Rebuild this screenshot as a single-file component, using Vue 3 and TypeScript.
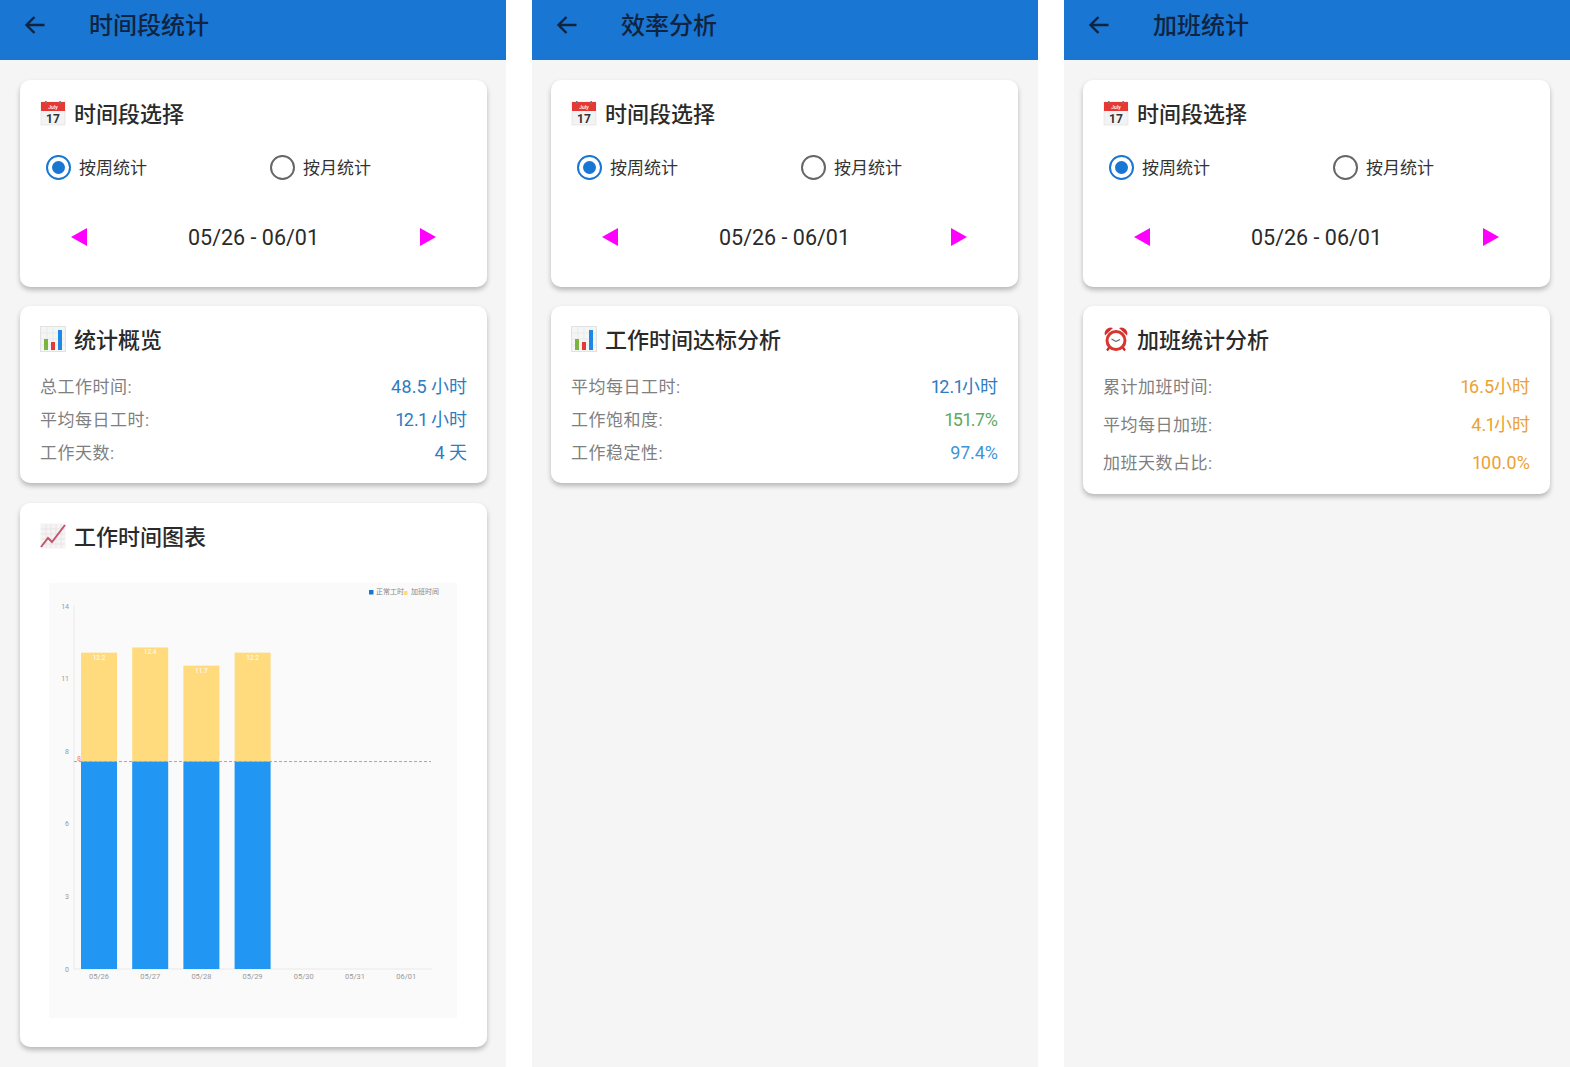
<template>
  <div class="screens">
    <section v-for="screen in screens" :key="screen.title" class="panel">
      <header class="app-bar">
        <svg class="back" width="22" height="20" viewBox="0 0 22 20">
          <path d="M20.5 10H3M10.5 2 2.5 10l8 8" fill="none" stroke="#10233f" stroke-width="2.4" />
        </svg>
        <h1>{{ screen.title }}</h1>
      </header>

      <div class="card pick-card">
        <h2 class="card-title">
          <svg class="emoji" viewBox="0 0 26 26">
            <rect x="1" y="2" width="24" height="23" fill="#f3f3f3" stroke="#ddd" stroke-width="0.6" />
            <rect x="1" y="2" width="24" height="9" fill="#e53935" />
            <rect x="5" y="1" width="1.6" height="3" fill="#777" />
            <rect x="19.4" y="1" width="1.6" height="3" fill="#777" />
            <text x="13" y="9" class="cal-month">July</text>
            <text x="13" y="22.5" class="cal-day">17</text>
          </svg>
          时间段选择
        </h2>
        <div class="radio-row">
          <div class="radio-option">
            <span class="radio on"><i></i></span>
            <span class="radio-label">按周统计</span>
          </div>
          <div class="radio-option">
            <span class="radio"></span>
            <span class="radio-label">按月统计</span>
          </div>
        </div>
        <div class="date-row">
          <span class="tri left"></span>
          <span class="date">05/26 - 06/01</span>
          <span class="tri right"></span>
        </div>
      </div>

      <div class="card stat-card" :class="{ wide: screen.wide }">
        <h2 class="card-title">
          <svg v-if="screen.icon === 'bars'" class="emoji" viewBox="0 0 26 26">
            <rect x="0.5" y="0.5" width="25" height="25" fill="#f4f6f6" stroke="#e2e2e2" />
            <path d="M1 7h24M1 13h24M1 19h24M7 1v24M13 1v24M19 1v24" stroke="#e3e6e6" stroke-width="0.6" />
            <rect x="4" y="13" width="4" height="11" fill="#7cb342" />
            <rect x="11" y="16" width="4" height="8" fill="#e53935" />
            <rect x="18" y="4" width="4" height="20" fill="#1e88e5" />
          </svg>
          <svg v-else class="emoji" viewBox="0 0 26 26">
            <path d="M2 9.5a6 6 0 0 1 8-7.5zM24 9.5a6 6 0 0 0-8-7.5z" fill="#d32f2f" />
            <path d="m6.5 21-2.5 3.5M19.5 21l2.5 3.5" stroke="#c62828" stroke-width="2.2" />
            <circle cx="13" cy="14.5" r="9" fill="#fff" stroke="#d9362f" stroke-width="3" />
            <path d="M13 15.5 8.5 13M13 15.5l4-2" stroke="#666" stroke-width="1.2" fill="none" />
          </svg>
          {{ screen.heading }}
        </h2>
        <div class="rows">
          <div v-for="row in screen.rows" :key="row.label" class="row">
            <span class="label">{{ row.label }}</span>
            <span class="value" :style="{ color: row.color }">{{ row.value }}</span>
          </div>
        </div>
      </div>

      <div v-if="screen.chart" class="card chart-card">
        <h2 class="card-title">
          <svg class="emoji" viewBox="0 0 26 26">
            <rect x="0.5" y="0.5" width="25" height="25" fill="#f6f3f4" />
            <path d="M1 6h24M1 11h24M1 16h24M1 21h24M6 1v24M11 1v24M16 1v24M21 1v24" stroke="#e4dfe2" stroke-width="0.7" />
            <path d="M1 24 8 15l4 4L25 2" fill="none" stroke="#c2566b" stroke-width="2" />
          </svg>
          工作时间图表
        </h2>
        <svg class="chart" width="408" height="435" viewBox="0 0 408 435">
          <line x1="25" y1="23" x2="25" :y2="baseY" class="axis" />
          <line x1="25" :y1="baseY" x2="383" :y2="baseY" class="axis" />
          <line x1="25" :y1="yOf(8)" x2="382" :y2="yOf(8)" class="limit" />
          <text x="30" y="178" class="limit-label">8</text>

          <text v-for="t in yTicks" :key="t.label" x="20" :y="t.y + 2.5" class="y-label">{{ t.label }}</text>

          <g v-for="(bar, i) in bars" :key="bar.date">
            <template v-if="bar.total > 0">
              <rect :x="barX(i)" :y="yOf(bar.total)" width="36" :height="yOf(8) - yOf(bar.total)" fill="#ffdb7e" />
              <rect :x="barX(i)" :y="yOf(8)" width="36" :height="baseY - yOf(8)" fill="#2196f3" />
              <text :x="barX(i) + 18" :y="yOf(bar.total) + 7" class="bar-label">{{ bar.total }}</text>
            </template>
            <text :x="barX(i) + 18" :y="baseY + 10" class="x-label">{{ bar.date }}</text>
          </g>

          <rect x="320" y="7" width="4.5" height="4.5" fill="#1976d2" />
          <text x="327" y="11" class="legend">正常工时</text>
          <rect x="355" y="8" width="3.5" height="4" fill="#ffdb7e" />
          <text x="362" y="11" class="legend">加班时间</text>
        </svg>
      </div>
    </section>
  </div>
</template>

<script setup lang="ts">
interface StatRow {
  label: string;
  value: string;
  color: string;
}

interface Screen {
  title: string;
  heading: string;
  icon: 'bars' | 'clock';
  rows: StatRow[];
  wide?: boolean;
  chart?: boolean;
}

const blue = '#2f7cc0';
const orange = '#eba234';

const screens: Screen[] = [
  {
    title: '时间段统计',
    heading: '统计概览',
    icon: 'bars',
    chart: true,
    rows: [
      { label: '总工作时间:', value: '48.5 小时', color: blue },
      { label: '平均每日工时:', value: '12.1 小时', color: blue },
      { label: '工作天数:', value: '4 天', color: blue },
    ],
  },
  {
    title: '效率分析',
    heading: '工作时间达标分析',
    icon: 'bars',
    rows: [
      { label: '平均每日工时:', value: '12.1小时', color: blue },
      { label: '工作饱和度:', value: '151.7%', color: '#5bab60' },
      { label: '工作稳定性:', value: '97.4%', color: '#3d94d8' },
    ],
  },
  {
    title: '加班统计',
    heading: '加班统计分析',
    icon: 'clock',
    wide: true,
    rows: [
      { label: '累计加班时间:', value: '16.5小时', color: orange },
      { label: '平均每日加班:', value: '4.1小时', color: orange },
      { label: '加班天数占比:', value: '100.0%', color: orange },
    ],
  },
];

const bars = [
  { date: '05/26', total: 12.2 },
  { date: '05/27', total: 12.4 },
  { date: '05/28', total: 11.7 },
  { date: '05/29', total: 12.2 },
  { date: '05/30', total: 0 },
  { date: '05/31', total: 0 },
  { date: '06/01', total: 0 },
];

// plot area in chart coordinates: value 14 at y=23, value 0 at y=386
const baseY = 386;
const yOf = (v: number) => baseY - (v / 14) * 363;
const barX = (i: number) => 32 + i * 51.2;

const yTicks = [0, 1, 2, 3, 4, 5].map((i) => ({
  label: Math.round(i * 2.8),
  y: yOf(i * 2.8),
}));
</script>

<style scoped>
.screens {
  display: grid;
  grid-template-columns: repeat(3, 506px);
  column-gap: 26px;
  height: 1067px;
  overflow: hidden;
  font-family: Roboto, 'Noto Sans CJK SC', sans-serif;
}

.panel {
  background: #f5f5f5;
  padding-left: 19px;
}

.panel:first-child {
  padding-left: 20px;
}

.app-bar {
  display: flex;
  align-items: center;
  height: 50px;
  padding-bottom: 10px;
  margin: 0 0 20px -19px;
  background: #1976d2;
}

.panel:first-child .app-bar {
  margin-left: -20px;
}

.back {
  margin-left: 24px;
}

.app-bar h1 {
  margin: 2px 0 0 43px;
  font-size: 24px;
  line-height: 30px;
  font-weight: 500;
  color: #10233f;
}

.card {
  width: 467px;
  box-sizing: border-box;
  padding: 20px 20px 0;
  margin-bottom: 20px;
  background: #fff;
  border-radius: 10px;
  box-shadow: 0 3px 5px rgba(0, 0, 0, 0.25);
}

.pick-card {
  height: 207px;
  margin-bottom: 19px;
}

.card-title {
  display: flex;
  align-items: flex-start;
  gap: 8px;
  height: 26px;
  margin: 0;
  font-size: 22px;
  line-height: 29px;
  font-weight: 500;
  color: #2a2a2a;
}

.emoji {
  width: 26px;
  height: 26px;
  flex: none;
}

.cal-month {
  font-size: 5px;
  fill: #fff;
  text-anchor: middle;
}

.cal-day {
  font-size: 12px;
  font-weight: 700;
  fill: #333;
  text-anchor: middle;
}

.radio-row {
  display: flex;
  height: 40px;
  margin: 21px 0 0 6px;
}

.radio-option {
  display: flex;
  align-items: center;
  flex: none;
  gap: 8px;
  width: 224px;
  font-size: 17px;
  line-height: 20px;
  color: #333;
}

.radio-label {
  margin-top: 2px;
}

.radio {
  display: flex;
  align-items: center;
  justify-content: center;
  width: 25px;
  height: 25px;
  box-sizing: border-box;
  border: 2.5px solid #666;
  border-radius: 50%;
}

.radio.on {
  border-color: #1976d2;
}

.radio i {
  width: 13px;
  height: 13px;
  border-radius: 50%;
  background: #1976d2;
}

.date-row {
  display: flex;
  align-items: center;
  justify-content: space-between;
  height: 30px;
  margin-top: 35px;
  padding: 0 31px;
}

.date {
  font-size: 21.5px;
  color: #2a2a2a;
}

.tri {
  width: 0;
  height: 0;
  border-top: 9px solid transparent;
  border-bottom: 9px solid transparent;
}

.tri.left {
  border-right: 16px solid #f0f;
}

.tri.right {
  border-left: 16px solid #f0f;
}

.stat-card {
  padding-bottom: 14px;
}

.rows {
  margin-top: 18px;
}

.row {
  display: flex;
  align-items: center;
  justify-content: space-between;
  height: 33px;
}

.stat-card.wide {
  padding-bottom: 12px;
}

.wide .rows {
  margin-top: 16px;
}

.wide .row {
  height: 38px;
}

.label {
  font-size: 17px;
  line-height: 22px;
  letter-spacing: 0.5px;
  color: #7f7f7f;
}

.value {
  font-size: 18px;
  line-height: 22px;
  font-variant-numeric: proportional-nums;
}

.chart-card {
  height: 544px;
}

.chart {
  display: block;
  margin: 34px 0 0 9px;
  background: #fafafa;
}

.axis {
  stroke: #e9e9e9;
  stroke-width: 1;
}

.limit {
  stroke: #ef8a6f;
  stroke-width: 1;
  stroke-dasharray: 3 2;
}

.limit-label {
  font-size: 7px;
  fill: #e8825f;
  text-anchor: middle;
}

.y-label {
  font-size: 7px;
  fill: #999;
  text-anchor: end;
}

.x-label {
  font-size: 7.5px;
  fill: #999;
  text-anchor: middle;
}

.bar-label {
  font-size: 6.5px;
  fill: #fff;
  text-anchor: middle;
}

.legend {
  font-size: 7px;
  fill: #888;
}
</style>

<style>
html,
body {
  margin: 0;
  background: #fff;
}
</style>
